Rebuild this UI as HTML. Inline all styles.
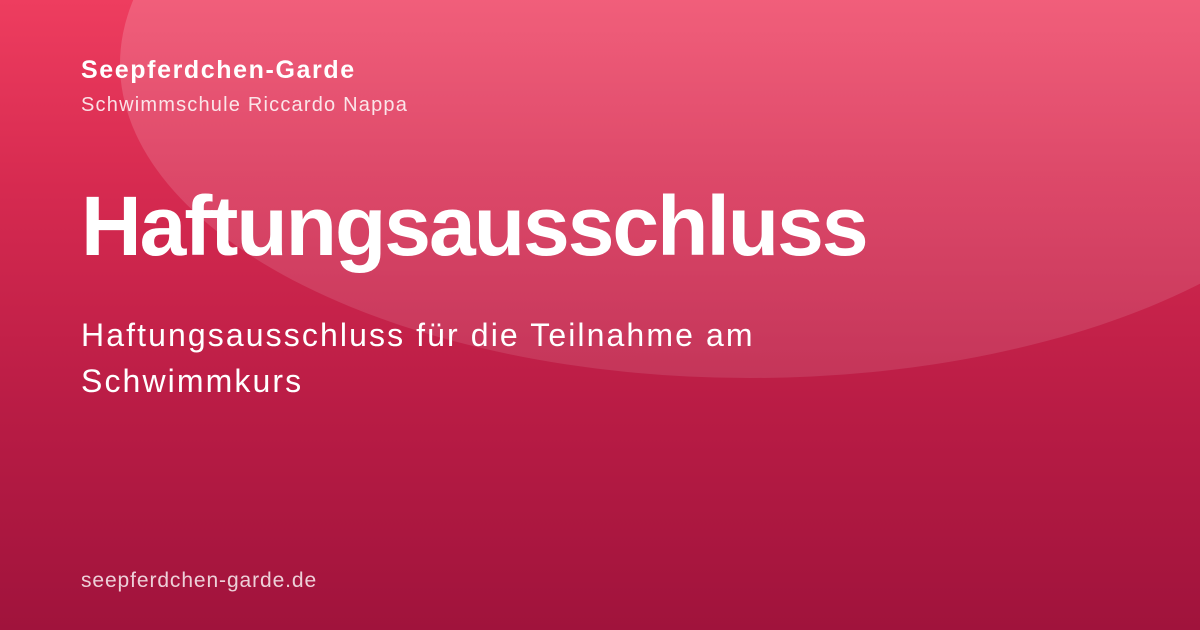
<!DOCTYPE html>
<html><head><meta charset="utf-8"><style>
html,body{margin:0;padding:0}
body{width:1200px;height:630px;overflow:hidden;position:relative;font-family:"Liberation Sans",sans-serif;color:#fff;
background:linear-gradient(180deg,#ee3d5f 0%,#d62a50 30%,#b91c45 65%,#a0133c 100%);}
.blob{position:absolute;left:120px;top:-250px;width:1260px;height:628px;border-radius:50%;
background:linear-gradient(180deg,rgba(255,255,255,0.22),rgba(255,255,255,0.10));}
.t{position:absolute;left:81px;white-space:nowrap}
</style></head><body>
<div class="blob"></div>
<div class="t" style="top:56px;font-size:25px;font-weight:bold;letter-spacing:1.6px">Seepferdchen-Garde</div>
<div class="t" style="top:94px;font-size:20px;letter-spacing:1.2px;opacity:.85">Schwimmschule Riccardo Nappa</div>
<div class="t" style="top:178px;font-size:84px;font-weight:bold;letter-spacing:-2px">Haftungsausschluss</div>
<div class="t" style="top:312px;font-size:32px;line-height:46px;letter-spacing:2.1px">Haftungsausschluss für die Teilnahme am<br>Schwimmkurs</div>
<div class="t" style="top:569px;font-size:21px;letter-spacing:0.9px;opacity:.8">seepferdchen-garde.de</div>
</body></html>
